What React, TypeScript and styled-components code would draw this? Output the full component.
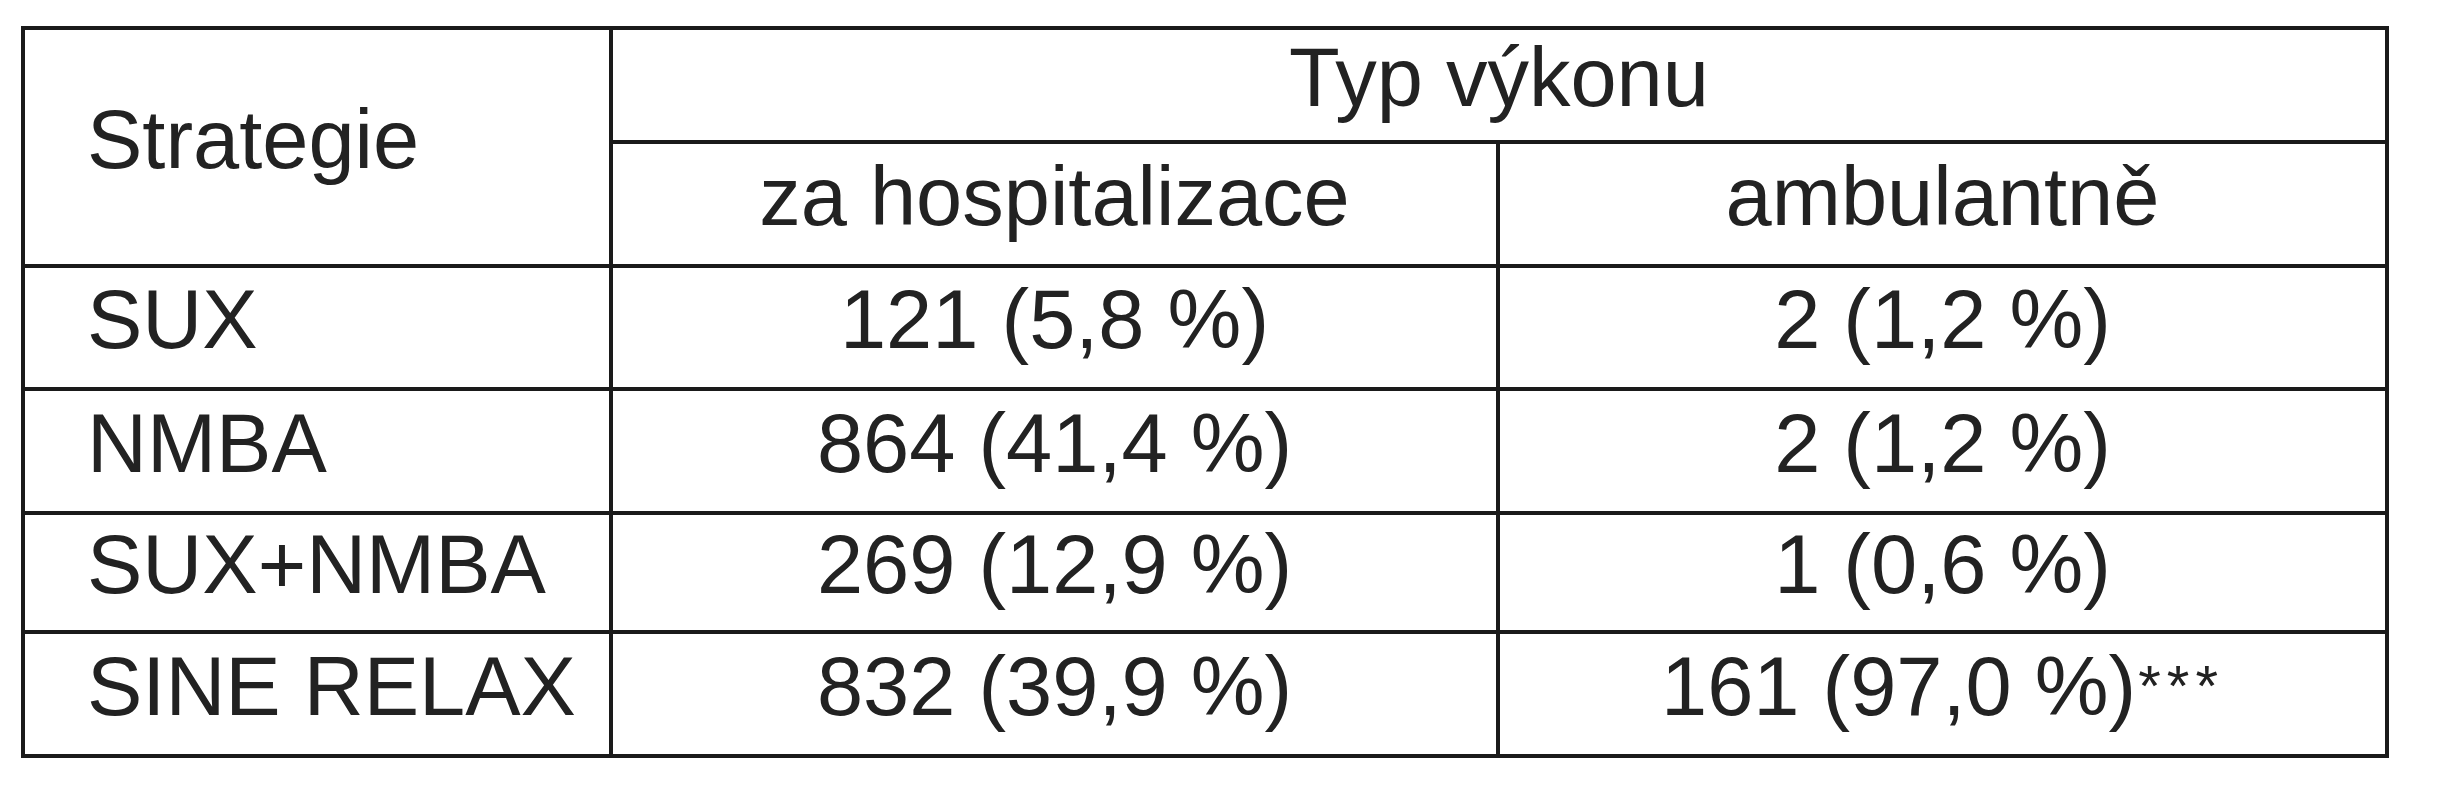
import React from "react";
import styled, { createGlobalStyle } from "styled-components";

const GlobalStyle = createGlobalStyle`
  html, body {
    margin: 0;
    padding: 0;
    background: #ffffff;
  }
  body {
    font-family: "Liberation Sans", Arial, sans-serif;
    color: #222222;
  }
`;

const Page = styled.div`
  padding: 26px 0 0 21px;
`;

const Grid = styled.div`
  display: inline-grid;
  grid-template-columns: 584px 883px 885px;
  grid-template-rows: 110px 120px 119px 120px 115px 120px;
  gap: 4px;
  padding: 4px;
  background: #1a1a1a;
`;

const Cell = styled.div<{ $align?: "left" | "center"; $rowSpan?: number; $colSpan?: number }>`
  background: #ffffff;
  display: flex;
  align-items: center;
  justify-content: ${(p) => (p.$align === "left" ? "flex-start" : "center")};
  padding: ${(p) => (p.$align === "left" ? "0 0 16px 62px" : "0 0 16px 0")};
  font-size: 83px;
  line-height: 1;
  white-space: nowrap;
  ${(p) => (p.$rowSpan ? `grid-row: span ${p.$rowSpan};` : "")}
  ${(p) => (p.$colSpan ? `grid-column: span ${p.$colSpan};` : "")}
`;

const Stars = styled.span`
  font-size: 58px;
  letter-spacing: 6px;
  vertical-align: 19px;
  line-height: 0;
  margin-left: 2px;
`;

type Row = { name: string; hosp: string; amb: string; stars?: boolean };

const rows: Row[] = [
  { name: "SUX", hosp: "121 (5,8 %)", amb: "2 (1,2 %)" },
  { name: "NMBA", hosp: "864 (41,4 %)", amb: "2 (1,2 %)" },
  { name: "SUX+NMBA", hosp: "269 (12,9 %)", amb: "1 (0,6 %)" },
  { name: "SINE RELAX", hosp: "832 (39,9 %)", amb: "161 (97,0 %)", stars: true },
];

export default function App() {
  return (
    <Page>
      <GlobalStyle />
      <Grid>
        <Cell $align="left" $rowSpan={2}>
          Strategie
        </Cell>
        <Cell $colSpan={2}>Typ výkonu</Cell>
        <Cell>za hospitalizace</Cell>
        <Cell>ambulantně</Cell>
        {rows.map((r) => (
          <React.Fragment key={r.name}>
            <Cell $align="left">{r.name}</Cell>
            <Cell>{r.hosp}</Cell>
            <Cell>
              {r.amb}
              {r.stars && <Stars>***</Stars>}
            </Cell>
          </React.Fragment>
        ))}
      </Grid>
    </Page>
  );
}
